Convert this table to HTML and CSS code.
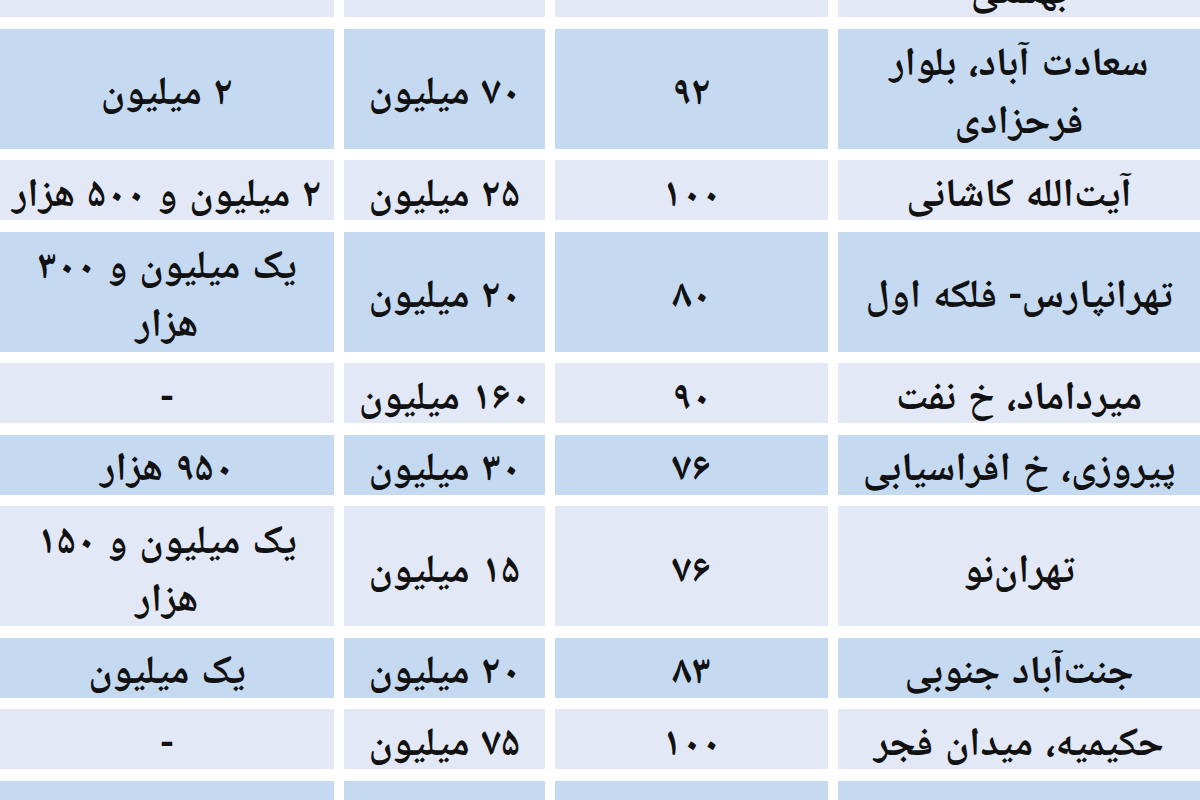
FILE: index.html
```html
<!DOCTYPE html>
<html lang="fa" dir="rtl">
<head>
<meta charset="utf-8">
<title>قیمت رهن و اجاره</title>
<link rel="stylesheet" href="styles.css">
</head>
<body>
<div class="sheet">
  <div class="grid">
    <div class="cell light">بهشتی</div>
    <div class="cell light"></div>
    <div class="cell light"></div>
    <div class="cell light"></div>

    <div class="cell dark tall">سعادت آباد، بلوار<br>فرحزادی</div>
    <div class="cell dark tall">۹۲</div>
    <div class="cell dark tall">۷۰ میلیون</div>
    <div class="cell dark tall">۲ میلیون</div>

    <div class="cell light">آیت‌الله کاشانی</div>
    <div class="cell light">۱۰۰</div>
    <div class="cell light">۲۵ میلیون</div>
    <div class="cell light">۲ میلیون و ۵۰۰ هزار</div>

    <div class="cell dark tall">تهرانپارس- فلکه اول</div>
    <div class="cell dark tall">۸۰</div>
    <div class="cell dark tall">۲۰ میلیون</div>
    <div class="cell dark tall">یک میلیون و ۳۰۰<br>هزار</div>

    <div class="cell light">میرداماد، خ نفت</div>
    <div class="cell light">۹۰</div>
    <div class="cell light">۱۶۰ میلیون</div>
    <div class="cell light">-</div>

    <div class="cell dark">پیروزی، خ افراسیابی</div>
    <div class="cell dark">۷۶</div>
    <div class="cell dark">۳۰ میلیون</div>
    <div class="cell dark">۹۵۰ هزار</div>

    <div class="cell light tall">تهران‌نو</div>
    <div class="cell light tall">۷۶</div>
    <div class="cell light tall">۱۵ میلیون</div>
    <div class="cell light tall">یک میلیون و ۱۵۰<br>هزار</div>

    <div class="cell dark">جنت‌آباد جنوبی</div>
    <div class="cell dark">۸۳</div>
    <div class="cell dark">۲۰ میلیون</div>
    <div class="cell dark">یک میلیون</div>

    <div class="cell light">حکیمیه، میدان فجر</div>
    <div class="cell light">۱۰۰</div>
    <div class="cell light">۷۵ میلیون</div>
    <div class="cell light">-</div>

    <div class="cell dark"></div>
    <div class="cell dark"></div>
    <div class="cell dark"></div>
    <div class="cell dark"></div>
  </div>
</div>
</body>
</html>
```
FILE: styles.css
```css
html, body {
  margin: 0;
  padding: 0;
  background: #ffffff;
}

body {
  width: 1200px;
  height: 800px;
  overflow: hidden;
  font-family: "Noto Naskh Arabic", "Noto Sans Arabic", "DejaVu Sans", sans-serif;
  color: #111111;
}

.sheet {
  width: 1200px;
  height: 800px;
  overflow: hidden;
}

.grid {
  direction: rtl;
  display: grid;
  grid-template-columns: 362px 273px 201px 1fr;
  column-gap: 10px;
  row-gap: 11.5px;
  margin-top: -43px;
}

.cell {
  box-sizing: border-box;
  display: flex;
  align-items: center;
  justify-content: center;
  text-align: center;
  white-space: nowrap;
  height: 60px;
  padding-top: 13px;
  font-size: 40px;
  font-weight: bold;
  line-height: 58px;
  word-spacing: 3px;
}

.cell.tall {
  height: 120px;
}

.light {
  background: #e2e8f5;
}

.dark {
  background: #c5d9f1;
}
```
